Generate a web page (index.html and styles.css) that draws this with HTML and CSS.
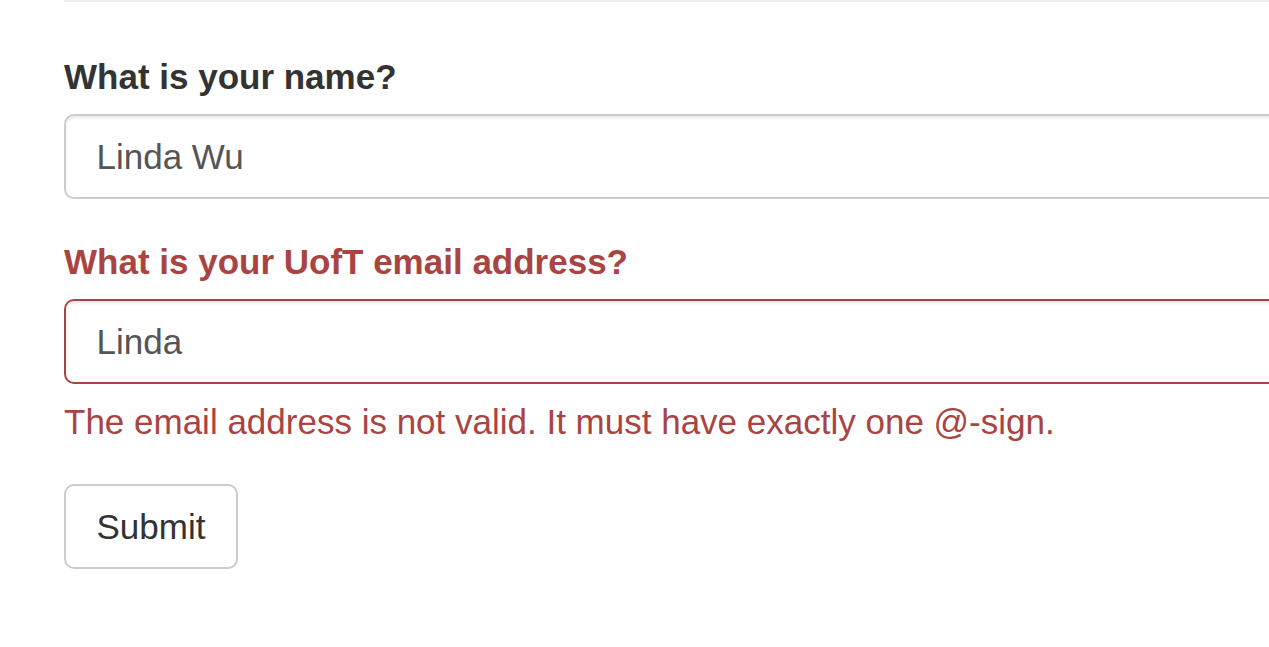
FILE: index.html
```html
<!DOCTYPE html>
<html lang="en">
<head>
<meta charset="utf-8">
<title>Form</title>
<link rel="stylesheet" href="styles.css">
</head>
<body>
<div class="container">
  <hr class="divider">
  <form class="form">
    <div class="form-group">
      <label class="control-label" for="name">What is your name?</label>
      <input class="form-control" id="name" type="text" value="Linda Wu">
    </div>
    <div class="form-group has-error">
      <label class="control-label" for="email">What is your UofT email address?</label>
      <input class="form-control" id="email" type="text" value="Linda">
      <span class="help-block">The email address is not valid. It must have exactly one @-sign.</span>
    </div>
    <button class="btn" type="button">Submit</button>
  </form>
</div>
</body>
</html>
```

FILE: styles.css
```css
html {
  overflow: hidden;
}
body {
  margin: 0;
  background: #fff;
  font-family: "Liberation Sans", Arial, Helvetica, sans-serif;
  font-size: 35px;
  line-height: 50px;
  color: #333;
}
.container {
  padding-left: 64px;
  width: 1500px;
}
.divider {
  margin: -0.5px 0 50px 0;
  border: 0;
  border-top: 2.5px solid #eee;
  height: 0;
}
.form-group {
  margin-bottom: 37.5px;
}
.control-label {
  display: block;
  font-weight: bold;
  margin-bottom: 12.5px;
  line-height: 50px;
}
.form-control {
  display: block;
  box-sizing: border-box;
  width: 100%;
  height: 85px;
  padding: 15px 30.5px;
  font-family: inherit;
  font-size: 35px;
  line-height: 50px;
  color: #555;
  background: #fff;
  border: 2.5px solid #ccc;
  border-radius: 10px;
  box-shadow: inset 0 2.5px 2.5px rgba(0, 0, 0, 0.075);
  margin: 0;
  outline: none;
}
.has-error .control-label,
.has-error .help-block {
  color: #a94442;
}
.has-error .form-control {
  border-color: #a94442;
}
.help-block {
  display: block;
  margin-top: 12.5px;
  margin-bottom: 25px;
}
.btn {
  display: inline-block;
  box-sizing: border-box;
  height: 85px;
  padding: 15px 30.5px;
  font-family: inherit;
  font-size: 35px;
  line-height: 50px;
  color: #333;
  background: #fff;
  border: 2.5px solid #ccc;
  border-radius: 10px;
  cursor: pointer;
}
```
